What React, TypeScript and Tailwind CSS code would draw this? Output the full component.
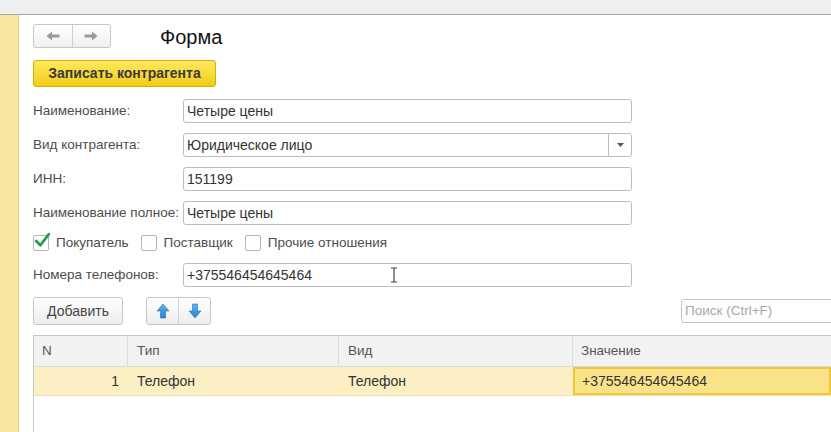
import React from 'react';

const FONT = '"Liberation Sans", Arial, sans-serif';

function NavArrow({ dir }: { dir: 'left' | 'right' }) {
  return (
    <svg width="16" height="12" viewBox="0 0 16 12">
      {dir === 'left' ? (
        <path d="M1.5 6 L7 1.5 L7 4.6 L14.5 4.6 L14.5 7.4 L7 7.4 L7 10.5 Z" fill="#9a9a9a" />
      ) : (
        <path d="M14.5 6 L9 1.5 L9 4.6 L1.5 4.6 L1.5 7.4 L9 7.4 L9 10.5 Z" fill="#9a9a9a" />
      )}
    </svg>
  );
}

function BlueArrow({ dir }: { dir: 'up' | 'down' }) {
  const id = `g-${dir}`;
  return (
    <svg width="14" height="16" viewBox="0 0 14 16">
      <defs>
        <linearGradient id={id} x1="0" y1="0" x2="0" y2="1">
          <stop offset="0" stopColor="#5cb4f0" />
          <stop offset="1" stopColor="#2a7fcf" />
        </linearGradient>
      </defs>
      {dir === 'up' ? (
        <path d="M7 1 L13 8 L9.5 8 L9.5 15 L4.5 15 L4.5 8 L1 8 Z" fill={`url(#${id})`} stroke="#2673bd" strokeWidth="0.6" />
      ) : (
        <path d="M7 15 L13 8 L9.5 8 L9.5 1 L4.5 1 L4.5 8 L1 8 Z" fill={`url(#${id})`} stroke="#2673bd" strokeWidth="0.6" />
      )}
    </svg>
  );
}

function Field({ label, value, select }: { label: string; value: string; select?: boolean }) {
  return (
    <div className="flex items-center h-[24px]">
      <div className="w-[150px] shrink-0 text-[13.5px] text-[#4d4d4d] whitespace-nowrap">{label}</div>
      <div className="w-[449px] h-[24px] flex items-center border border-[#bdbdbd] rounded-[3px] bg-white">
        <div className="flex-1 px-[3px] text-[14px] text-[#333]">{value}</div>
        {select && (
          <div className="w-[23px] h-full border-l border-[#bdbdbd] flex items-center justify-center">
            <svg width="7" height="4" viewBox="0 0 7 4">
              <path d="M0 0 L7 0 L3.5 4 Z" fill="#555" />
            </svg>
          </div>
        )}
      </div>
    </div>
  );
}

function Check({ checked, label }: { checked?: boolean; label: string }) {
  return (
    <div className="flex items-center gap-[7px] mr-[12px]">
      <div className="relative w-[16px] h-[16px] border border-[#b5b5b5] rounded-[2px] bg-white">
        {checked && (
          <svg className="absolute -top-[4px] left-[0px]" width="17" height="17" viewBox="0 0 16 16">
            <path d="M2 8.5 L6 12.5 L14 2" fill="none" stroke="#2e9a4e" strokeWidth="2.6" strokeLinecap="round" strokeLinejoin="round" />
          </svg>
        )}
      </div>
      <span className="text-[13.5px] text-[#4d4d4d]">{label}</span>
    </div>
  );
}

export default function App() {
  return (
    <div className="w-[831px] h-[432px] overflow-hidden flex flex-col bg-white" style={{ fontFamily: FONT }}>
      {/* top strip */}
      <div className="h-[15px] shrink-0 bg-[#efefef] border-b border-[#a9a9a9]" />

      <div className="flex flex-1 min-h-0">
        <div className="w-[19px] shrink-0 bg-[#f9e7a0] border-r border-[#e6d38a]" />

        <div className="flex-1 min-w-0 pl-[14px] pt-[9px] flex flex-col">
          {/* nav + title */}
          <div className="flex items-center h-[24px]">
            <div className="flex w-[78px] h-[24px] border border-[#c6c6c6] rounded-[3px] bg-gradient-to-b from-white to-[#efefef]">
              <div className="flex-1 flex items-center justify-center border-r border-[#d0d0d0]">
                <NavArrow dir="left" />
              </div>
              <div className="flex-1 flex items-center justify-center">
                <NavArrow dir="right" />
              </div>
            </div>
            <div className="ml-[49px] text-[20px] leading-none text-[#111] pt-[2px]">Форма</div>
          </div>

          {/* save button */}
          <div className="mt-[12px] w-[183px] h-[27px] flex items-center justify-center rounded-[3px] border border-[#d4b000] bg-gradient-to-b from-[#fde95a] to-[#f2cc08] text-[14px] font-bold text-[#3a3a3a]">
            Записать контрагента
          </div>

          {/* fields */}
          <div className="mt-[12px] flex flex-col gap-[10px]">
            <Field label="Наименование:" value="Четыре цены" />
            <Field label="Вид контрагента:" value="Юридическое лицо" select />
            <Field label="ИНН:" value="151199" />
            <Field label="Наименование полное:" value="Четыре цены" />
          </div>

          <div className="mt-[10px] h-[16px] flex items-center">
            <Check checked label="Покупатель" />
            <Check label="Поставщик" />
            <Check label="Прочие отношения" />
          </div>

          <div className="mt-[12px] relative">
            <Field label="Номера телефонов:" value="+375546454645464" />
            {/* text cursor */}
            <svg className="absolute left-[357px] top-[4px]" width="8" height="16" viewBox="0 0 8 16">
              <path d="M1 1 L7 1 M4 1 L4 15 M1 15 L7 15" stroke="#444" strokeWidth="1.2" fill="none" />
            </svg>
          </div>

          {/* command bar */}
          <div className="mt-[10px] flex items-center h-[28px]">
            <div className="w-[90px] h-[28px] flex items-center justify-center border border-[#c6c6c6] rounded-[3px] bg-gradient-to-b from-white to-[#ededed] text-[14px] text-[#444]">
              Добавить
            </div>
            <div className="ml-[23px] flex w-[65px] h-[28px] border border-[#c6c6c6] rounded-[3px] bg-gradient-to-b from-white to-[#ededed]">
              <div className="flex-1 flex items-center justify-center border-r border-[#d0d0d0]">
                <BlueArrow dir="up" />
              </div>
              <div className="flex-1 flex items-center justify-center">
                <BlueArrow dir="down" />
              </div>
            </div>
            <div className="ml-auto w-[160px] mr-[-10px] h-[24px] flex items-center border border-[#c2c2c2] rounded-l-[3px] px-[3px] text-[13.5px] text-[#a8a8a8]">
              Поиск (Ctrl+F)
            </div>
          </div>

          {/* table */}
          <div className="mt-[10px] flex-1 border-l border-t border-[#c8c8c8] flex flex-col">
            <div className="flex h-[31px] bg-[#f2f2f2] border-b border-[#dcdcdc] text-[13.5px] text-[#555]">
              <div className="w-[94px] flex items-center pl-[8px] border-r border-[#dcdcdc]">N</div>
              <div className="w-[211px] flex items-center pl-[9px] border-r border-[#dcdcdc]">Тип</div>
              <div className="w-[234px] flex items-center pl-[9px] border-r border-[#dcdcdc]">Вид</div>
              <div className="flex-1 flex items-center pl-[8px]">Значение</div>
            </div>
            <div className="flex h-[29px] bg-[#fcefc4] border-b border-[#ecdfb5] text-[14px] text-[#333]">
              <div className="w-[94px] flex items-center justify-end pr-[9px]">1</div>
              <div className="w-[211px] flex items-center pl-[9px]">Телефон</div>
              <div className="w-[234px] flex items-center pl-[9px]">Телефон</div>
              <div className="flex-1 flex items-center pl-[7px] bg-[#fbe38a] border-2 border-[#f1c535]">+375546454645464</div>
            </div>
          </div>
        </div>
      </div>
    </div>
  );
}
